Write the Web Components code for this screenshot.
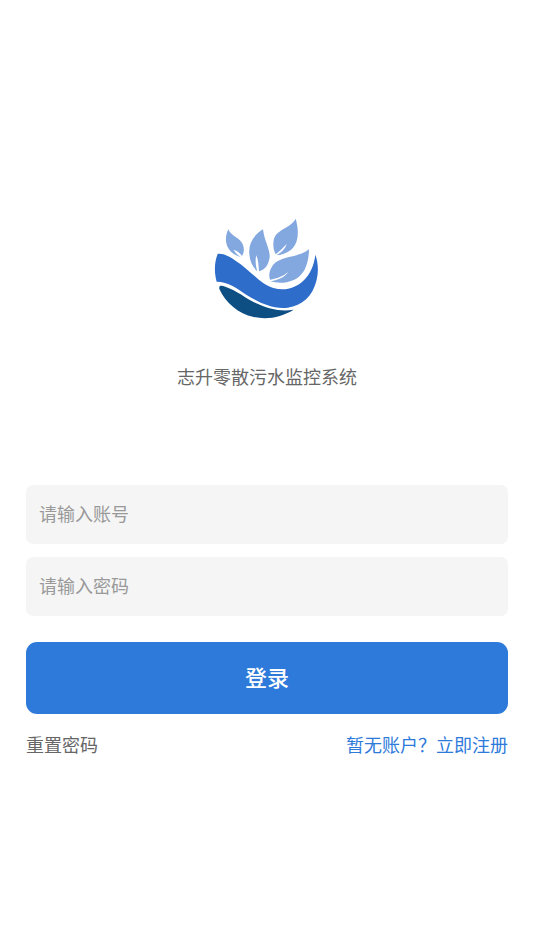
<!DOCTYPE html>
<html lang="zh-CN">
<head>
<meta charset="utf-8">
<meta name="viewport" content="width=device-width, initial-scale=1">
<title>志升零散污水监控系统</title>
<style>
body { margin: 0; background: #fff; color: #666; font: 18px/26px "Liberation Sans", "Noto Sans CJK SC", sans-serif; }
</style>
</head>
<body>
<login-page></login-page>
<script>
const define = (name, html, setup) => customElements.define(name, class extends HTMLElement {
  constructor() {
    super();
    this.attachShadow({ mode: 'open' }).innerHTML = html;
  }
  connectedCallback() { if (setup) setup(this, this.shadowRoot); }
});

define('brand-logo', `
<style>:host { display: block; width: 120px; } svg { display: block; width: 100%; }</style>
<svg viewBox="0 0 360 360" role="img" aria-label="logo">
  <g fill="#82a8df">
    <path d="M64 58C54 79 54 101 66 118C74 130 88 138 102 141C93 136 84 128 80 119C90 122 100 130 105 138C114 124 112 104 100 92C86 79 70 74 64 58Z"/>
    <path d="M168 58C138 77 124 102 127 133C129 155 137 172 151 184C146 168 144 151 148 136C154 151 155 167 156 184C175 180 185 163 188 142C190 119 172 94 168 58Z"/>
    <path d="M266 26C248 58 206 57 200 91C197 108 200 121 206 133C214 127 228 114 239 102C234 118 222 128 208 136C237 134 260 119 268 96C276 73 272 46 266 26Z"/>
    <path d="M306 118C272 145 222 136 198 165C188 178 184 194 189 209C210 205 228 200 243 186C235 200 215 210 190 214C218 222 252 219 276 200C298 182 305 151 306 118Z"/>
  </g>
  <path fill="#2e6dca" d="M32 132C52 128 81 147 110 170C143 196 165 224 199 234C235 244 265 234 289 212C310 192 321 166 325 134C334 158 335 187 328 213C317 258 286 287 242 293C195 298 155 277 119 255C91 236 64 215 29 215C21 187 22 157 32 132Z"/>
  <path fill="#0d4e83" d="M37 231C38 225 46 227 55 230C91 242 116 265 148 280C184 297 223 306 260 299C224 321 183 330 140 321C94 311 57 280 37 237Z"/>
</svg>`);

define('text-field', `
<style>
:host { display: block; }
input { display: block; box-sizing: border-box; width: 100%; padding: 17px 13px 16px; border: 0; border-radius: 7px; background: #f5f5f5; color: #333; font: inherit; outline-color: #2e7adb; }
input::placeholder { color: #999; opacity: 1; }
</style>
<input>`, (host, root) => {
  const input = root.querySelector('input');
  const label = host.getAttribute('label');
  input.type = host.getAttribute('type') || 'text';
  input.name = host.getAttribute('name');
  input.placeholder = label;
  input.setAttribute('aria-label', label);
});

define('primary-button', `
<style>
:host { display: block; }
button { display: block; width: 100%; padding: 21px 20px 19px; border: 0; border-radius: 11px; background: #2e7adb; color: #fff; font: inherit; font-size: 22px; line-height: 32px; font-weight: 500; cursor: pointer; }
</style>
<button type="button"><slot></slot></button>`);

define('text-link', `
<style>a { color: inherit; text-decoration: none; }</style>
<a href="#"><slot></slot></a>`);

define('login-page', `
<style>
:host { display: block; padding: 210px 26px 40px; }
header { display: flex; flex-direction: column; align-items: center; gap: 35px; }
h1 { margin: 0; font: inherit; }
form { display: grid; gap: 13px; margin-top: 94px; }
primary-button { margin-top: 13px; }
nav { display: flex; justify-content: space-between; margin-top: 19px; }
.register { color: #2e7adb; }
</style>
<header><brand-logo></brand-logo><h1>志升零散污水监控系统</h1></header>
<main>
  <form>
    <text-field name="account" label="请输入账号"></text-field>
    <text-field name="password" type="password" label="请输入密码"></text-field>
    <primary-button>登录</primary-button>
  </form>
  <nav><text-link>重置密码</text-link><text-link class="register">暂无账户？立即注册</text-link></nav>
</main>`);
</script>
</body>
</html>
